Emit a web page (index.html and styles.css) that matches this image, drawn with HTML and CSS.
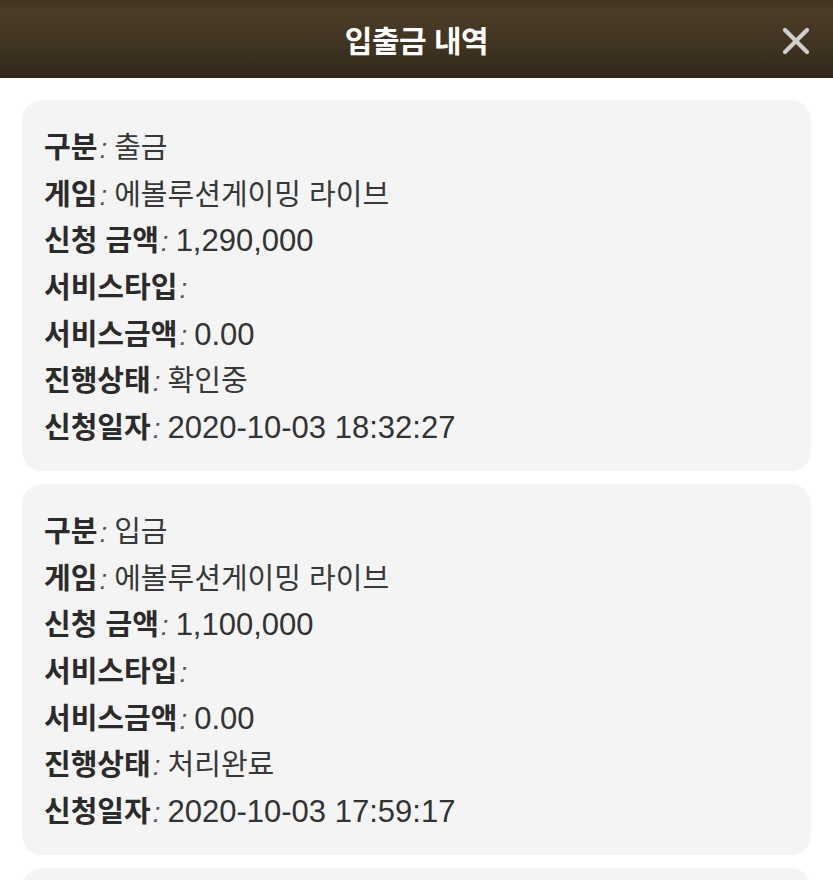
FILE: index.html
```html
<!DOCTYPE html>
<html lang="ko">
<head>
<meta charset="utf-8">
<link rel="stylesheet" href="styles.css">
</head>
<body>
<header class="topbar">
  <h1 class="title">입출금 내역</h1>
  <button class="close" aria-label="닫기">
    <svg width="30" height="30" viewBox="0 0 30 30"><path d="M4 4 L26 26 M26 4 L4 26" stroke="#d0d0d0" stroke-width="4.2" stroke-linecap="round"/></svg>
  </button>
</header>
<main class="list">
  <section class="card">
    <div class="row"><b>구분</b><i>:</i><span class="ko">출금</span></div>
    <div class="row"><b>게임</b><i>:</i><span class="ko">에볼루션게이밍 라이브</span></div>
    <div class="row"><b>신청 금액</b><i>:</i><span class="num">1,290,000</span></div>
    <div class="row"><b>서비스타입</b><i>:</i></div>
    <div class="row"><b>서비스금액</b><i>:</i><span class="num">0.00</span></div>
    <div class="row"><b>진행상태</b><i>:</i><span class="ko">확인중</span></div>
    <div class="row"><b>신청일자</b><i>:</i><span class="num">2020-10-03 18:32:27</span></div>
  </section>
  <section class="card">
    <div class="row"><b>구분</b><i>:</i><span class="ko">입금</span></div>
    <div class="row"><b>게임</b><i>:</i><span class="ko">에볼루션게이밍 라이브</span></div>
    <div class="row"><b>신청 금액</b><i>:</i><span class="num">1,100,000</span></div>
    <div class="row"><b>서비스타입</b><i>:</i></div>
    <div class="row"><b>서비스금액</b><i>:</i><span class="num">0.00</span></div>
    <div class="row"><b>진행상태</b><i>:</i><span class="ko">처리완료</span></div>
    <div class="row"><b>신청일자</b><i>:</i><span class="num">2020-10-03 17:59:17</span></div>
  </section>
  <section class="card">
    <div class="row"><b>구분</b><i>:</i><span class="ko">입금</span></div>
  </section>
</main>
</body>
</html>
```
FILE: styles.css
```css
html, body {
  margin: 0;
  padding: 0;
  background: #ffffff;
  font-family: "Liberation Sans", "Noto Sans CJK KR", sans-serif;
}
.topbar {
  height: 78px;
  display: flex;
  align-items: center;
  justify-content: center;
  position: relative;
  background: linear-gradient(to bottom, #3e3320 0%, #4b3e27 15%, #3f3421 60%, #30261a 100%);
  box-sizing: border-box;
}
.title {
  margin: 0;
  color: #ffffff;
  font-family: "Noto Sans CJK KR", sans-serif;
  font-size: 30px;
  line-height: 40px;
  font-weight: 700;
  letter-spacing: -0.5px;
}
.close {
  position: absolute;
  right: 22px;
  top: 26px;
  width: 30px;
  height: 30px;
  padding: 0;
  border: 0;
  background: none;
  display: flex;
}
.list {
  padding: 22px 22px 0;
  display: flex;
  flex-direction: column;
  gap: 13px;
}
.card {
  background: #f4f4f4;
  border-radius: 20px;
  padding: 22px 22px;
}
.row {
  display: flex;
  align-items: baseline;
  height: 46.7px;
  line-height: 46.7px;
  color: #333333;
  white-space: nowrap;
}
.row b {
  font-family: "Noto Sans CJK KR", sans-serif;
  font-size: 29px;
  font-weight: 700;
  color: #2b2b2b;
}
.row i {
  font-family: "Liberation Sans", sans-serif;
  font-size: 28px;
  font-style: italic;
  color: #555555;
  margin: 0 7px 0 2px;
}
.ko {
  font-family: "Noto Sans CJK KR", sans-serif;
  font-size: 29px;
  font-weight: 400;
  color: #383838;
}
.num {
  font-family: "Liberation Sans", sans-serif;
  font-size: 31px;
  color: #333333;
}
```
